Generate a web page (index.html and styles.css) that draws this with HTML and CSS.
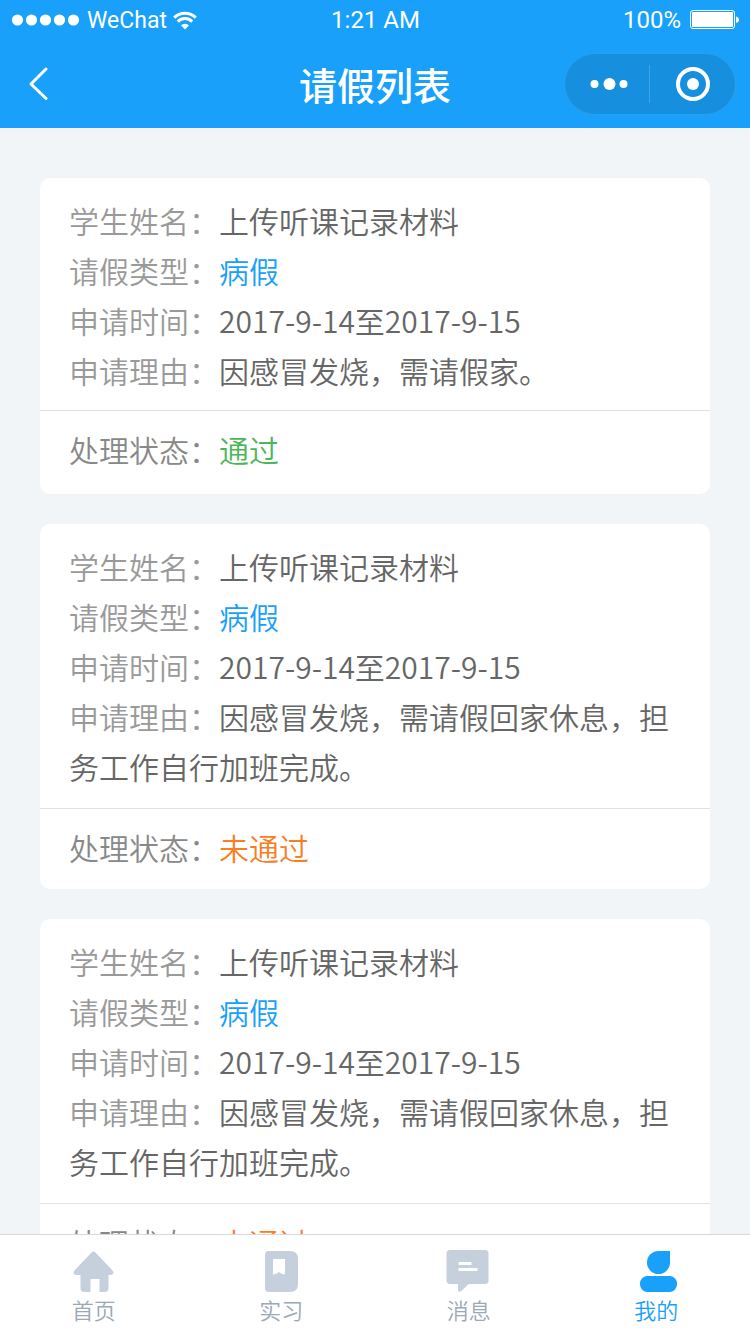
FILE: index.html
```html
<!DOCTYPE html>
<html lang="zh-CN">
<head>
  <meta charset="UTF-8" />
  <meta name="viewport" content="width=device-width, initial-scale=1.0"/>
  <title>请假列表</title>
  <link rel="stylesheet" href="styles.css">
</head>
<body>

<header>
  <div class="status-bar">
    <div class="carrier">
      <svg width="68" height="12" viewBox="0 0 68 12" fill="#fff">
        <circle cx="5.5" cy="6" r="5.6"/>
        <circle cx="19.5" cy="6" r="5.6"/>
        <circle cx="33.5" cy="6" r="5.6"/>
        <circle cx="47.5" cy="6" r="5.6"/>
        <circle cx="61.5" cy="6" r="5.6"/>
      </svg>
      <span class="carrier-name">WeChat</span>
      <svg width="24" height="19" viewBox="0 0 24 19" fill="none" stroke="#fff" stroke-width="3">
        <path d="M1.2 6.6a15.3 15.3 0 0 1 21.6 0"/>
        <path d="M4.8 10.6a10.2 10.2 0 0 1 14.4 0"/>
        <path d="M12 18.5l-4-4.2a5.7 5.7 0 0 1 8 0z" fill="#fff" stroke="none"/>
      </svg>
    </div>
    <span class="time">1:21 AM</span>
    <div class="battery">
      <span>100%</span>
      <svg width="49" height="20" viewBox="0 0 49 20">
        <rect x="0.5" y="0.5" width="44" height="18" rx="2.5" fill="none" stroke="#fff"/>
        <rect x="2" y="2" width="41" height="15" rx="1" fill="#fff"/>
        <path d="M46 6.5c4 1 4 5.500 0 6.500z" fill="#fff"/>
      </svg>
    </div>
  </div>

  <div class="nav-bar">
    <button class="back" aria-label="返回">
      <svg width="20" height="34" viewBox="0 0 20 34" fill="none" stroke="#fff" stroke-width="3" stroke-linecap="round" stroke-linejoin="round">
        <path d="M17 2L2 17l15 14.500"/>
      </svg>
    </button>
    <h1>请假列表</h1>
    <div class="capsule">
      <button class="more" aria-label="更多">
        <svg width="38" height="12" viewBox="0 0 38 12" fill="#fff">
          <circle cx="4.500" cy="6" r="4"/>
          <circle cx="19.500" cy="6" r="6"/>
          <circle cx="33.500" cy="6" r="4"/>
        </svg>
      </button>
      <button class="close" aria-label="关闭">
        <svg width="34" height="34" viewBox="0 0 34 34">
          <circle cx="17" cy="17" r="15" fill="none" stroke="#fff" stroke-width="4"/>
          <circle cx="17" cy="17" r="6" fill="#fff"/>
        </svg>
      </button>
    </div>
  </div>
</header>

<main>
  <section class="card short">
    <div class="card-body">
      <p><span class="label">学生姓名：</span>上传听课记录材料</p>
      <p><span class="label">请假类型：</span><span class="type">病假</span></p>
      <p><span class="label">申请时间：</span>2017-9-14至2017-9-15</p>
      <p><span class="label">申请理由：</span>因感冒发烧，需请假家。</p>
    </div>
    <p class="card-status">处理状态：<span class="pass">通过</span></p>
  </section>

  <section class="card">
    <div class="card-body">
      <p><span class="label">学生姓名：</span>上传听课记录材料</p>
      <p><span class="label">请假类型：</span><span class="type">病假</span></p>
      <p><span class="label">申请时间：</span>2017-9-14至2017-9-15</p>
      <p><span class="label">申请理由：</span>因感冒发烧，需请假回家休息，担务工作自行加班完成。</p>
    </div>
    <p class="card-status">处理状态：<span class="fail">未通过</span></p>
  </section>

  <section class="card">
    <div class="card-body">
      <p><span class="label">学生姓名：</span>上传听课记录材料</p>
      <p><span class="label">请假类型：</span><span class="type">病假</span></p>
      <p><span class="label">申请时间：</span>2017-9-14至2017-9-15</p>
      <p><span class="label">申请理由：</span>因感冒发烧，需请假回家休息，担务工作自行加班完成。</p>
    </div>
    <p class="card-status">处理状态：<span class="fail">未通过</span></p>
  </section>
</main>

<nav class="tab-bar">
  <a href="#home">
    <svg width="44" height="44" viewBox="0 0 44 44" fill="currentColor">
      <path d="M19.500 2.500q2-2 4 0L40 20c2.500 2.500 1.500 5-1.500 5h-2V38q0 4-4 4h-5V29h-9v13h-6q-4 0-4-4V25H4.500C1.500 25 .5 22.500 3 20z"/>
    </svg>
    首页
  </a>
  <a href="#practice">
    <svg width="44" height="44" viewBox="0 0 44 44" fill="currentColor">
      <path fill-rule="evenodd" d="M10 1h21q8 0 8 8v25q0 8-8 8H10q-4 0-4-4V5q0-4 4-4zM14 9v15.500q4-.5 6-2.500 2 2 6 2.500V9z"/>
    </svg>
    实习
  </a>
  <a href="#message">
    <svg width="44" height="44" viewBox="0 0 44 44" fill="currentColor">
      <path fill-rule="evenodd" d="M3 0h35q3.500 0 3.500 3.500v27q0 3.500-3.500 3.500H21.500l-7 7q-3.500 2-3.500-1.500V34H3q-3.500 0-3.500-3.500v-27Q-.5 0 3 0zM11.500 12v3h13v-3zM11.500 18v3h19v-3z"/>
    </svg>
    消息
  </a>
  <a href="#mine" class="active">
    <svg width="44" height="44" viewBox="0 0 44 44" fill="currentColor">
      <path d="M36 1v11.500A11.500 11.500 0 1 1 24.500 1z"/>
      <rect x="6" y="26" width="37" height="16" rx="7.500"/>
    </svg>
    我的
  </a>
</nav>

</body>
</html>
```
FILE: styles.css
```css
* {
  box-sizing: border-box;
}

body {
  font-family: "Noto Sans CJK SC", sans-serif;
  font-weight: 350;
  background: #f1f5f8;
  margin: 0;
  display: flex;
  flex-direction: column;
  height: 100vh;
}

header {
  background: #18a0fa;
  color: white;
}

h1, p {
  margin: 0;
}

button {
  padding: 0;
  border: none;
  background: none;
  cursor: pointer;
  display: flex;
  align-items: center;
  justify-content: center;
}

.status-bar {
  display: grid;
  grid-template-columns: 1fr auto 1fr;
  align-items: center;
  height: 40px;
  padding: 0 11px 0 12px;
  font-family: Roboto, sans-serif;
  font-weight: 400;
  font-size: 24px;
}

.carrier, .battery {
  display: flex;
  align-items: center;
}

.carrier-name {
  font-size: 23px;
  margin: 0 6px 0 7px;
}

.battery {
  justify-content: flex-end;
  gap: 9px;
}

.nav-bar {
  display: grid;
  grid-template-columns: 1fr auto 1fr;
  align-items: center;
  height: 88px;
  padding: 0 14px;
}

.back {
  justify-self: start;
  margin-left: 15px;
}

h1 {
  font-size: 38px;
  font-weight: 500;
  line-height: 56px;
}

.capsule {
  justify-self: end;
  display: flex;
  width: 172px;
  height: 62px;
  border: 1px solid #2c9fec;
  border-radius: 31px;
  background: #178fdf;
  align-items: center;
}

.capsule button {
  height: 38px;
}

.more {
  width: 84px;
  padding-left: 3px;
}

.close {
  flex: 1;
  border-left: 1px solid #3fa5e8;
}

main {
  flex: 1;
  min-height: 0;
  overflow: hidden;
  padding: 50px 40px 0;
}

.card {
  min-height: 316px;
  margin-bottom: 30px;
  border-radius: 10px;
  background: white;
  color: #666;
  font-size: 30px;
  line-height: 50px;
}

.card-body {
  padding: 17px 29px;
}

.short .card-body {
  padding-bottom: 15px;
}

.label {
  color: #999;
}

.type {
  color: #18a0fa;
}

.card-status {
  padding: 13px 29px 17px;
  border-top: 1px solid #e2e2e2;
  color: #888;
}

.pass {
  color: #4bb658;
}

.fail {
  color: #fa7d1e;
}

.tab-bar {
  display: flex;
  height: 100px;
  border-top: 1px solid #d8d8d8;
  background: white;
}

.tab-bar a {
  flex: 1;
  display: flex;
  flex-direction: column;
  align-items: center;
  padding-top: 15px;
  color: #9ba8b5;
  font-size: 22px;
  line-height: 30px;
  text-decoration: none;
}

.tab-bar svg {
  color: #c5d0dc;
  overflow: visible;
}

.tab-bar .active, .active svg {
  color: #18a0fa;
}
```
